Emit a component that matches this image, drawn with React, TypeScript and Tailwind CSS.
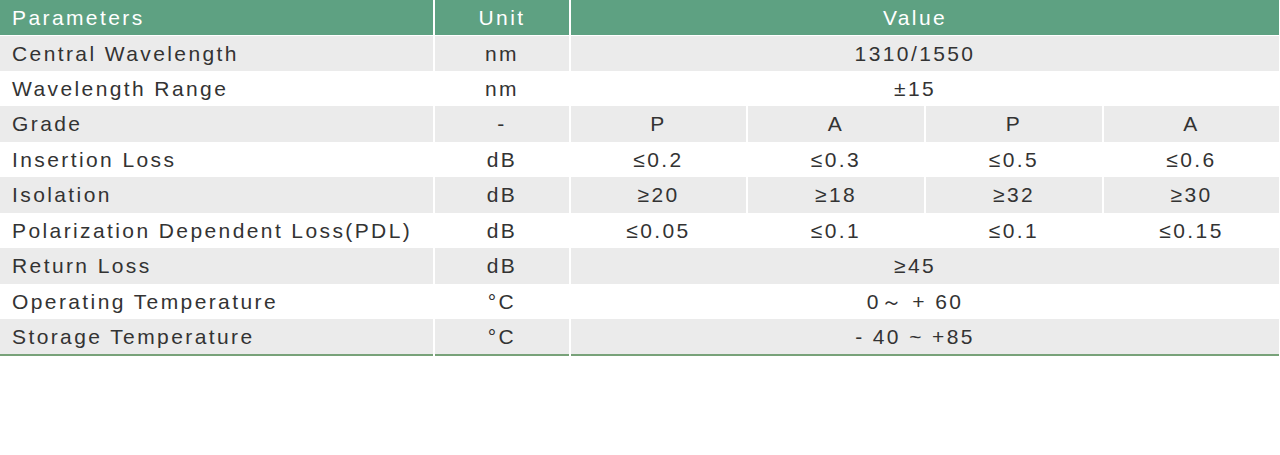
const rows: { name: string; unit: string; value?: string; grades?: string[]; gray: boolean }[] = [
  { name: 'Central Wavelength', unit: 'nm', value: '1310/1550', gray: true },
  { name: 'Wavelength Range', unit: 'nm', value: '±15', gray: false },
  { name: 'Grade', unit: '-', grades: ['P', 'A', 'P', 'A'], gray: true },
  { name: 'Insertion Loss', unit: 'dB', grades: ['≤0.2', '≤0.3', '≤0.5', '≤0.6'], gray: false },
  { name: 'Isolation', unit: 'dB', grades: ['≥20', '≥18', '≥32', '≥30'], gray: true },
  { name: 'Polarization Dependent Loss(PDL)', unit: 'dB', grades: ['≤0.05', '≤0.1', '≤0.1', '≤0.15'], gray: false },
  { name: 'Return Loss', unit: 'dB', value: '≥45', gray: true },
  { name: 'Operating Temperature', unit: '°C', value: '0～ + 60', gray: false },
  { name: 'Storage Temperature', unit: '°C', value: '- 40 ~ +85', gray: true },
];

export default function App() {
  return (
    <div className="w-[1280px] h-[455px] bg-white" style={{ fontFamily: '"Liberation Sans", Arial, sans-serif' }}>
      <table className="w-[1279px] table-fixed border-collapse text-[21px] tracking-[2.4px] text-[#333333]">
        <colgroup>
          <col className="w-[434px]" />
          <col className="w-[136px]" />
          <col className="w-[177px]" />
          <col className="w-[178px]" />
          <col className="w-[178px]" />
          <col className="w-[176px]" />
        </colgroup>
        <thead>
          <tr className="h-[35px] bg-[#5ea182] text-white">
            <th className="border-r-2 border-white pl-3 text-left font-normal">Parameters</th>
            <th className="border-r-2 border-white text-center font-normal">Unit</th>
            <th colSpan={4} className="text-center font-normal pr-5">Value</th>
          </tr>
        </thead>
        <tbody className="border-b-2 border-[#78a279]">
          {rows.map((r, i) => (
            <tr
              key={r.name}
              className={`${i % 2 === 0 ? 'h-[36px]' : 'h-[35px]'} ${r.gray ? 'bg-[#ebebeb]' : 'bg-white'} ${i === 0 ? 'border-t border-white' : ''}`}
            >
              <td className="border-r-2 border-white pl-3 text-left">{r.name}</td>
              <td className="border-r-2 border-white text-center">{r.unit}</td>
              {r.grades ? (
                r.grades.map((g, j) => (
                  <td key={j} className={`text-center ${j < 3 ? 'border-r-2 border-white' : ''}`}>
                    {g}
                  </td>
                ))
              ) : (
                <td colSpan={4} className="text-center pr-5">
                  {r.value}
                </td>
              )}
            </tr>
          ))}
        </tbody>
      </table>
    </div>
  );
}
